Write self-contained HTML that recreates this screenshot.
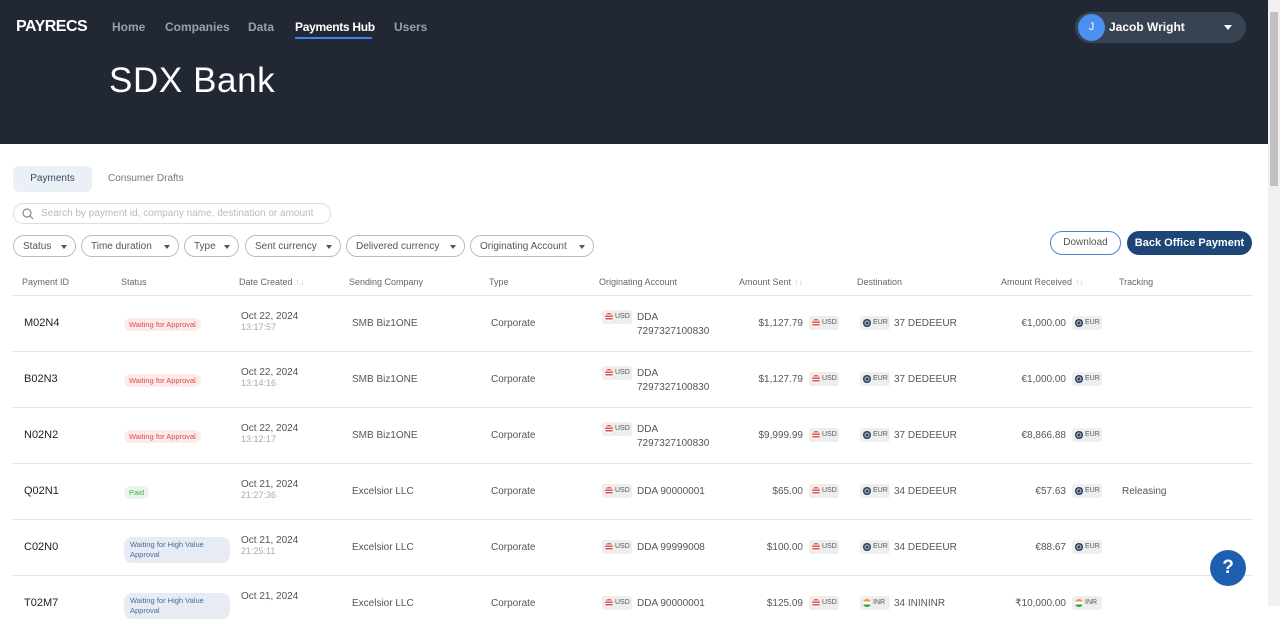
<!DOCTYPE html>
<html><head><meta charset="utf-8"><style>
*{box-sizing:border-box;margin:0;padding:0}
body{width:1280px;height:606px;overflow:hidden;background:#fff;font-family:"Liberation Sans",sans-serif;color:#333;position:relative}
.hdr{position:absolute;left:0;top:0;width:1268px;height:144px;background:#212833}
.logo{position:absolute;left:16px;top:18px;color:#fff;font-weight:bold;font-size:16px;letter-spacing:-0.5px}
.nav{position:absolute;top:20px;font-size:12px;font-weight:bold;color:#9aa0a8}
.nav.act{color:#fff}
.ul{position:absolute;left:295px;top:37px;width:77px;height:2px;background:#3b82f6}
.h1{position:absolute;left:109px;top:61px;color:#fff;font-size:35px;letter-spacing:0.6px}
.user{position:absolute;left:1075px;top:12px;width:171px;height:31px;border-radius:16px;background:#374352}
.av{position:absolute;left:3px;top:2px;width:27px;height:27px;border-radius:50%;background:#4a90f0;color:#fff;font-size:11px;text-align:center;line-height:27px}
.un{position:absolute;left:34px;top:8px;color:#fff;font-weight:bold;font-size:12px}
.car{position:absolute;left:149px;top:13px;border-left:4px solid transparent;border-right:4px solid transparent;border-top:5px solid #fff}
.sb{position:absolute;left:1268px;top:0;width:12px;height:606px;background:#f1f1f1}
.sbt{position:absolute;left:1270px;top:12px;width:8px;height:174px;background:#c1c1c1}
.tab{position:absolute;top:166px;height:26px;font-size:10px;line-height:26px;border-radius:6px}
.search{position:absolute;left:13px;top:203px;width:318px;height:21px;border:1px solid #ddd;border-radius:11px;font-size:10px;color:#bbb;line-height:20px;padding-left:27px}
.chip{position:absolute;top:235px;height:22px;border:1px solid #bbb;border-radius:11px;font-size:10px;color:#555;line-height:21px;padding-left:9px}
.chip:after{content:"";position:absolute;right:8px;top:9px;border-left:3.5px solid transparent;border-right:3.5px solid transparent;border-top:4px solid #555}
.btn{position:absolute;top:231px;height:24px;border-radius:12px;font-size:10px;line-height:22px;text-align:center}
.th{position:absolute;top:277px;font-size:9px;color:#666}
.srt{color:#ccc;font-size:9px;margin-left:3px}
.line{position:absolute;left:13px;width:1240px;height:1px;background:#e4e4e4}
.c{position:absolute;font-size:10px;color:#555;white-space:nowrap}
.id{font-size:11px;color:#222}
.bd{position:absolute;font-size:7.5px;border-radius:7px;padding:2px 5px}
.red{background:#fdeaea;color:#e04848}
.grn{background:#e8f7ea;color:#43a857}
.blu{background:#e7ecf4;color:#4a6a96;width:106px;line-height:10px;padding:3px 6px;border-radius:8px}
.sm{font-size:9px;color:#aaa}
.cur{position:absolute;height:14px;background:#eee;border-radius:3px;font-size:7px;color:#555;line-height:14px;padding-left:13px;width:30px}
.cur i{position:absolute;left:3px;top:3px;width:8px;height:8px;border-radius:50%}
.us i{background:repeating-linear-gradient(#e05050 0 1.3px,#fff 1.3px 2.6px)}
.eu i{background:#1d3f9a;box-shadow:inset 0 0 0 1.5px #1d3f9a,inset 0 0 0 2.5px #e7c43a}
.in i{background:linear-gradient(#f29530 33%,#fff 33% 66%,#3a9a46 66%)}
.help{position:absolute;left:1210px;top:550px;width:36px;height:36px;border-radius:50%;background:#1f5fb0;color:#fff;font-weight:bold;font-size:19px;text-align:center;line-height:36px}
</style></head><body>
<div class="hdr">
<div class="logo">PAYRECS</div>
<div class="nav" style="left:112px">Home</div>
<div class="nav" style="left:165px">Companies</div>
<div class="nav" style="left:248px">Data</div>
<div class="nav act" style="left:295px;letter-spacing:-0.3px">Payments Hub</div>
<div class="nav" style="left:394px">Users</div>
<div class="ul"></div>
<div class="h1">SDX Bank</div>
<div class="user"><div class="av">J</div><div class="un">Jacob Wright</div><div class="car"></div></div>
</div>
<div class="sb"></div><div class="sbt"></div>

<div class="tab" style="left:13px;width:79px;background:#ebf0f7;color:#3a4a60;text-align:center">Payments</div>
<div class="tab" style="left:108px;color:#777">Consumer Drafts</div>
<div class="search"><svg style="position:absolute;left:8px;top:4px" width="12" height="12" viewBox="0 0 12 12"><circle cx="5" cy="5" r="4" fill="none" stroke="#888" stroke-width="1.2"/><path d="M8 8l3 3" stroke="#888" stroke-width="1.2"/></svg>Search by payment id, company name, destination or amount</div>

<div class="chip" style="left:13px;width:63px">Status</div>
<div class="chip" style="left:81px;width:98px">Time duration</div>
<div class="chip" style="left:184px;width:55px">Type</div>
<div class="chip" style="left:245px;width:96px">Sent currency</div>
<div class="chip" style="left:346px;width:119px">Delivered currency</div>
<div class="chip" style="left:470px;width:124px">Originating Account</div>
<div class="btn" style="left:1050px;width:71px;border:1px solid #4a86d8;color:#555">Download</div>
<div class="btn" style="left:1127px;width:125px;background:#1d4576;color:#fff;font-weight:bold;font-size:11px;line-height:24px">Back Office Payment</div>

<div class="th" style="left:22px">Payment ID</div>
<div class="th" style="left:121px">Status</div>
<div class="th" style="left:239px">Date Created<span class="srt">↑↓</span></div>
<div class="th" style="left:349px">Sending Company</div>
<div class="th" style="left:489px">Type</div>
<div class="th" style="left:599px">Originating Account</div>
<div class="th" style="left:739px">Amount Sent<span class="srt">↑↓</span></div>
<div class="th" style="left:857px">Destination</div>
<div class="th" style="left:1001px">Amount Received<span class="srt">↑↓</span></div>
<div class="th" style="left:1119px">Tracking</div>
<div class="line" style="top:295px"></div>

<div class="c id" style="left:24px;top:317px">M02N4</div>
<div class="bd red" style="left:124px;top:318px">Waiting for Approval</div>
<div class="c" style="left:241px;top:311px">Oct 22, 2024<br><span class="sm">13:17:57</span></div>
<div class="c" style="left:352px;top:318px">SMB Biz1ONE</div>
<div class="c" style="left:491px;top:318px">Corporate</div>
<div class="cur us" style="left:602px;top:310px"><i></i>USD</div>
<div class="c" style="left:637px;top:311px;line-height:14px">DDA<br>7297327100830</div>
<div class="c" style="right:477px;top:318px">$1,127.79</div>
<div class="cur us" style="left:809px;top:316px"><i></i>USD</div>
<div class="cur eu" style="left:860px;top:316px"><i></i>EUR</div>
<div class="c" style="left:894px;top:318px">37 DEDEEUR</div>
<div class="c" style="right:214px;top:318px">€1,000.00</div>
<div class="cur eu" style="left:1072px;top:316px"><i></i>EUR</div>
<div class="line" style="top:351px"></div>

<div class="c id" style="left:24px;top:373px">B02N3</div>
<div class="bd red" style="left:124px;top:374px">Waiting for Approval</div>
<div class="c" style="left:241px;top:367px">Oct 22, 2024<br><span class="sm">13:14:16</span></div>
<div class="c" style="left:352px;top:374px">SMB Biz1ONE</div>
<div class="c" style="left:491px;top:374px">Corporate</div>
<div class="cur us" style="left:602px;top:366px"><i></i>USD</div>
<div class="c" style="left:637px;top:367px;line-height:14px">DDA<br>7297327100830</div>
<div class="c" style="right:477px;top:374px">$1,127.79</div>
<div class="cur us" style="left:809px;top:372px"><i></i>USD</div>
<div class="cur eu" style="left:860px;top:372px"><i></i>EUR</div>
<div class="c" style="left:894px;top:374px">37 DEDEEUR</div>
<div class="c" style="right:214px;top:374px">€1,000.00</div>
<div class="cur eu" style="left:1072px;top:372px"><i></i>EUR</div>
<div class="line" style="top:407px"></div>

<div class="c id" style="left:24px;top:429px">N02N2</div>
<div class="bd red" style="left:124px;top:430px">Waiting for Approval</div>
<div class="c" style="left:241px;top:423px">Oct 22, 2024<br><span class="sm">13:12:17</span></div>
<div class="c" style="left:352px;top:430px">SMB Biz1ONE</div>
<div class="c" style="left:491px;top:430px">Corporate</div>
<div class="cur us" style="left:602px;top:422px"><i></i>USD</div>
<div class="c" style="left:637px;top:423px;line-height:14px">DDA<br>7297327100830</div>
<div class="c" style="right:477px;top:430px">$9,999.99</div>
<div class="cur us" style="left:809px;top:428px"><i></i>USD</div>
<div class="cur eu" style="left:860px;top:428px"><i></i>EUR</div>
<div class="c" style="left:894px;top:430px">37 DEDEEUR</div>
<div class="c" style="right:214px;top:430px">€8,866.88</div>
<div class="cur eu" style="left:1072px;top:428px"><i></i>EUR</div>
<div class="line" style="top:463px"></div>

<div class="c id" style="left:24px;top:485px">Q02N1</div>
<div class="bd grn" style="left:124px;top:486px">Paid</div>
<div class="c" style="left:241px;top:479px">Oct 21, 2024<br><span class="sm">21:27:36</span></div>
<div class="c" style="left:352px;top:486px">Excelsior LLC</div>
<div class="c" style="left:491px;top:486px">Corporate</div>
<div class="cur us" style="left:602px;top:484px"><i></i>USD</div>
<div class="c" style="left:637px;top:486px">DDA 90000001</div>
<div class="c" style="right:477px;top:486px">$65.00</div>
<div class="cur us" style="left:809px;top:484px"><i></i>USD</div>
<div class="cur eu" style="left:860px;top:484px"><i></i>EUR</div>
<div class="c" style="left:894px;top:486px">34 DEDEEUR</div>
<div class="c" style="right:214px;top:486px">€57.63</div>
<div class="cur eu" style="left:1072px;top:484px"><i></i>EUR</div>
<div class="c" style="left:1122px;top:486px">Releasing</div>
<div class="line" style="top:519px"></div>

<div class="c id" style="left:24px;top:541px">C02N0</div>
<div class="bd blu" style="left:124px;top:537px">Waiting for High Value Approval</div>
<div class="c" style="left:241px;top:535px">Oct 21, 2024<br><span class="sm">21:25:11</span></div>
<div class="c" style="left:352px;top:542px">Excelsior LLC</div>
<div class="c" style="left:491px;top:542px">Corporate</div>
<div class="cur us" style="left:602px;top:540px"><i></i>USD</div>
<div class="c" style="left:637px;top:542px">DDA 99999008</div>
<div class="c" style="right:477px;top:542px">$100.00</div>
<div class="cur us" style="left:809px;top:540px"><i></i>USD</div>
<div class="cur eu" style="left:860px;top:540px"><i></i>EUR</div>
<div class="c" style="left:894px;top:542px">34 DEDEEUR</div>
<div class="c" style="right:214px;top:542px">€88.67</div>
<div class="cur eu" style="left:1072px;top:540px"><i></i>EUR</div>
<div class="line" style="top:575px"></div>

<div class="c id" style="left:24px;top:597px">T02M7</div>
<div class="bd blu" style="left:124px;top:593px">Waiting for High Value Approval</div>
<div class="c" style="left:241px;top:591px">Oct 21, 2024</div>
<div class="c" style="left:352px;top:598px">Excelsior LLC</div>
<div class="c" style="left:491px;top:598px">Corporate</div>
<div class="cur us" style="left:602px;top:596px"><i></i>USD</div>
<div class="c" style="left:637px;top:598px">DDA 90000001</div>
<div class="c" style="right:477px;top:598px">$125.09</div>
<div class="cur us" style="left:809px;top:596px"><i></i>USD</div>
<div class="cur in" style="left:860px;top:596px"><i></i>INR</div>
<div class="c" style="left:894px;top:598px">34 INININR</div>
<div class="c" style="right:214px;top:598px">₹10,000.00</div>
<div class="cur in" style="left:1072px;top:596px"><i></i>INR</div>

<div class="help">?</div>
</body></html>
